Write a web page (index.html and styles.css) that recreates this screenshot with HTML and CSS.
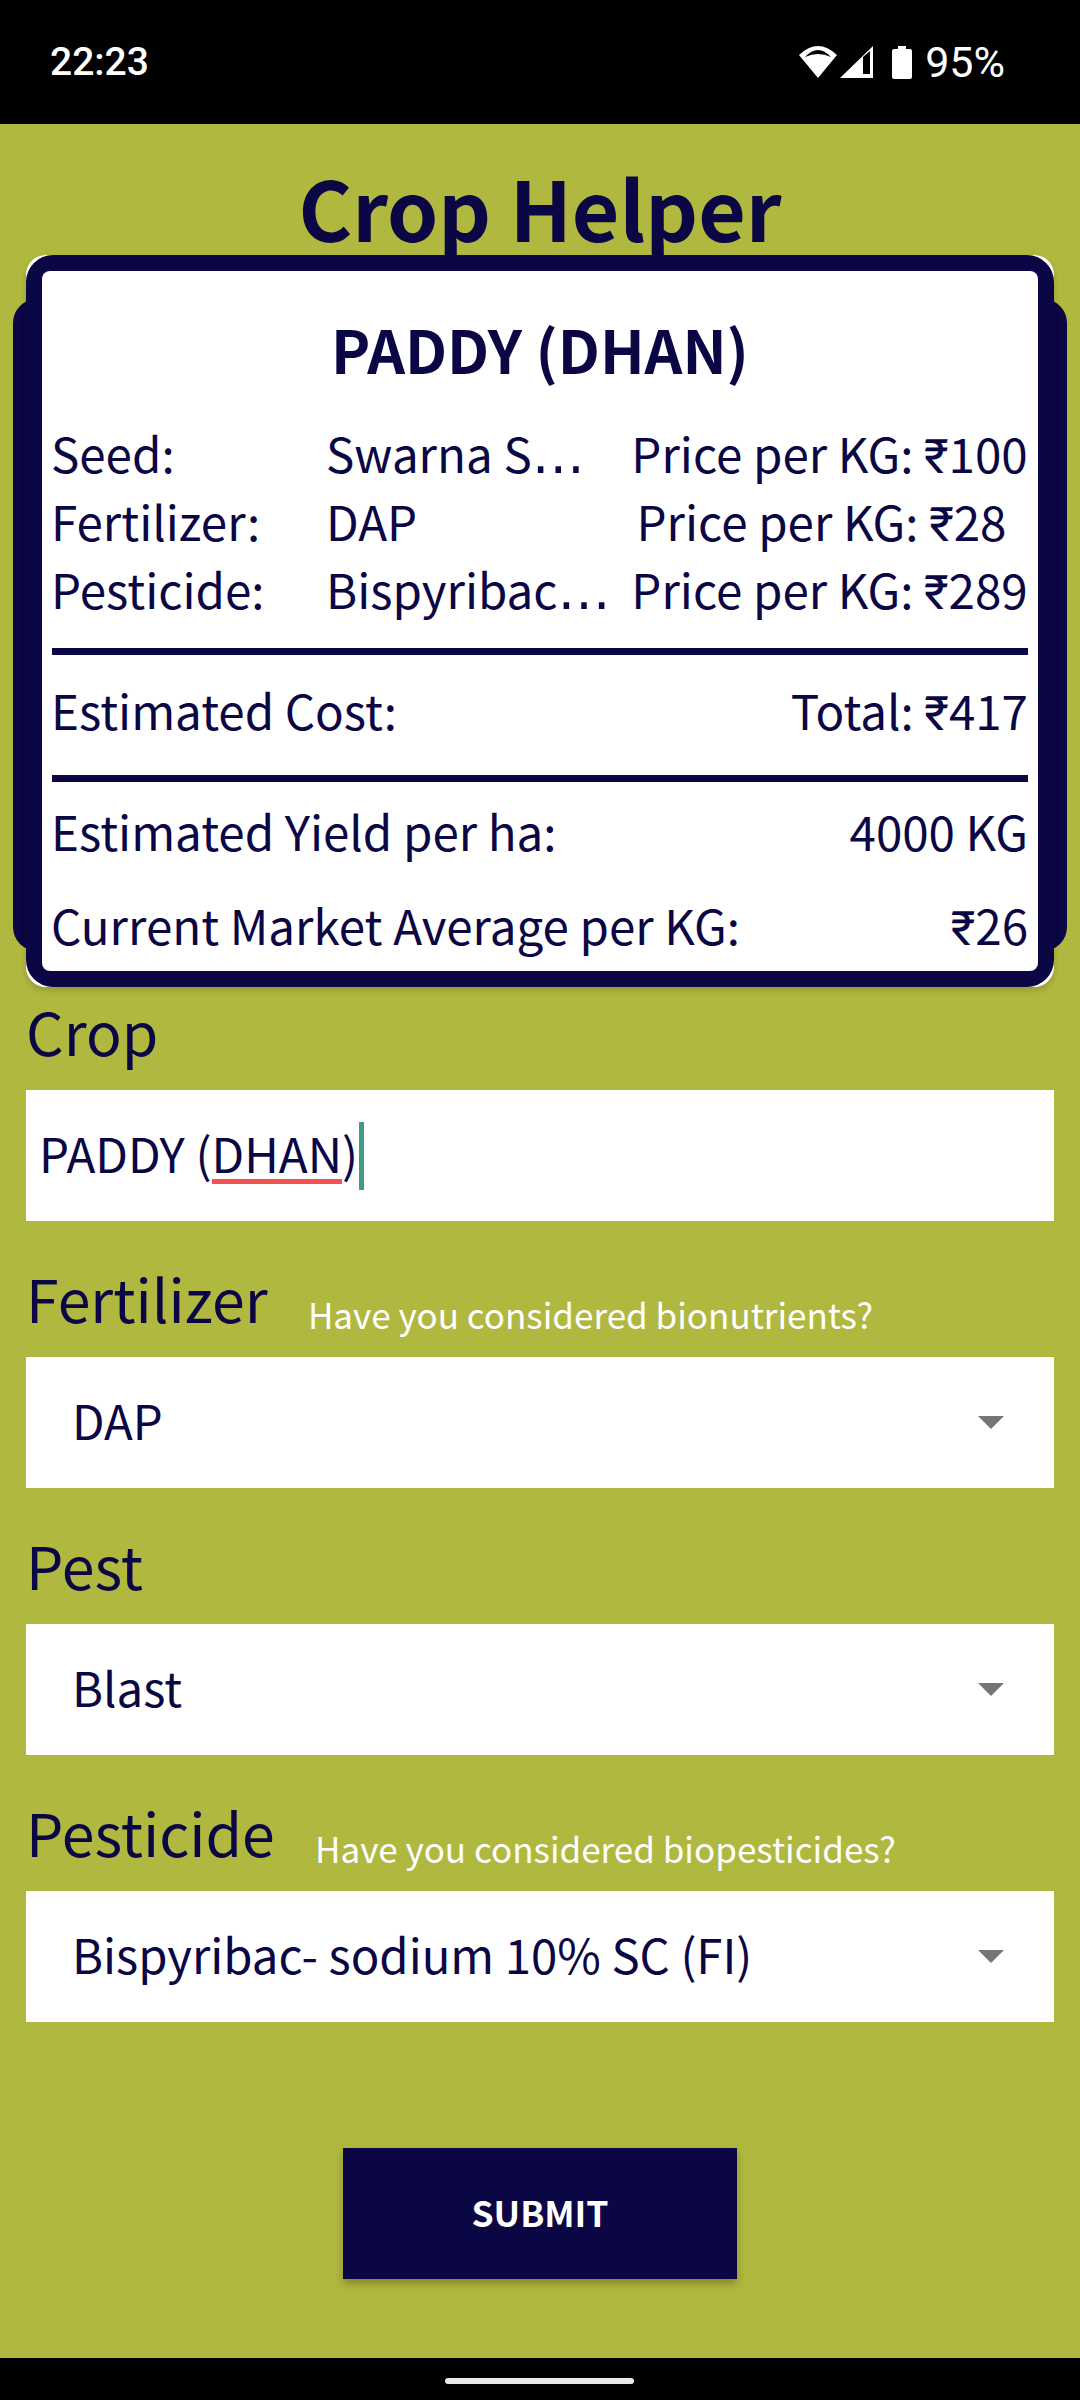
FILE: index.html
```html
<!DOCTYPE html>
<html lang="en">
    <head>
        <meta charset="utf-8" />
        <title>Crop Helper</title>
        <link rel="stylesheet" href="styles.css">
    </head>
    <body>
        <div id="statusBar">
            <span class="clock">22:23</span>
            <div class="statusIcons">
                <svg class="wifi" width="38" height="32" viewBox="0 0 38 32"><path d="M19 32 L0 9 Q19 -9 38 9 Z M6 11 Q19 -3 32 11 Q19 5 6 11 Z" fill="#fff" fill-rule="evenodd"/></svg>
                <svg class="signal" width="33" height="32" viewBox="0 0 33 32"><path d="M33 0 V32 H0 Z M23 28 H30 V5 L23 11 Z" fill="#fff" fill-rule="evenodd"/></svg>
                <svg class="battery" width="20" height="33" viewBox="0 0 20 33"><path d="M6 0 H14 V3 H18 Q20 3 20 5 V31 Q20 33 18 33 H2 Q0 33 0 31 V5 Q0 3 2 3 H6 Z" fill="#fff"/></svg>
                <span class="percent">95%</span>
            </div>
        </div>

        <div id="content">
            <h1 class="appTitle">Crop Helper</h1>

            <div class="cardWrap">
                <div class="card">
                    <div class="cardFrame">
                        <h2 class="cropName">PADDY (DHAN)</h2>
                        <div class="inputRows">
                            <div class="inputRow">
                                <span class="rowLabel">Seed:</span>
                                <span class="rowValue">Swarna S<span class="dots">…</span></span>
                                <span class="rowPrice">Price per KG: ₹100</span>
                            </div>
                            <div class="inputRow">
                                <span class="rowLabel">Fertilizer:</span>
                                <span class="rowValue">DAP</span>
                                <span class="rowPrice priceShort">Price per KG: ₹28</span>
                            </div>
                            <div class="inputRow">
                                <span class="rowLabel">Pesticide:</span>
                                <span class="rowValue">Bispyribac<span class="dots">…</span></span>
                                <span class="rowPrice">Price per KG: ₹289</span>
                            </div>
                        </div>
                        <div class="costRow">
                            <span>Estimated Cost:</span>
                            <span>Total: ₹417</span>
                        </div>
                        <div class="yieldRow">
                            <span>Estimated Yield per ha:</span>
                            <span>4000 KG</span>
                        </div>
                        <div class="marketRow">
                            <span>Current Market Average per KG:</span>
                            <span>₹26</span>
                        </div>
                    </div>
                </div>
            </div>

            <div class="fieldLabel firstLabel">Crop</div>
            <div class="cropInput">
                <span>PADDY (<span class="misspelt">DHAN</span>)</span><span class="caret"></span>
            </div>

            <div class="fieldLabel">Fertilizer <span class="hint">Have you considered bionutrients?</span></div>
            <div class="selectBox">
                <span>DAP</span>
                <span class="arrow"></span>
            </div>

            <div class="fieldLabel">Pest</div>
            <div class="selectBox">
                <span>Blast</span>
                <span class="arrow"></span>
            </div>

            <div class="fieldLabel">Pesticide <span class="hint">Have you considered biopesticides?</span></div>
            <div class="selectBox">
                <span>Bispyribac- sodium 10% SC (FI)</span>
                <span class="arrow"></span>
            </div>

            <div class="submitWrap">
                <button class="submitBtn">SUBMIT</button>
            </div>
        </div>

        <div id="navBar">
            <div class="homeBar"></div>
        </div>
    </body>
</html>
```
FILE: styles.css
```css
* {
    box-sizing: border-box;
}
html, body {
    margin: 0;
    padding: 0;
}
body {
    width: 1080px;
    height: 2400px;
    background-color: #000;
    font-family: "Noto Sans CJK SC", Roboto, "Noto Sans", sans-serif;
    color: #0B0644;
    overflow: hidden;
}

/* status bar */
#statusBar {
    height: 124px;
    background-color: #000;
    color: #fff;
    display: flex;
    justify-content: space-between;
    align-items: center;
    padding: 0 75px 0 50px;
    font-family: Roboto, sans-serif;
}
.clock {
    font-size: 39px;
    font-weight: 500;
}
.percent {
    font-size: 43px;
    font-weight: 400;
}
.statusIcons {
    display: flex;
    align-items: center;
}
.wifi {
    margin-right: 3px;
}
.signal {
    margin-right: 19px;
}
.battery {
    margin-right: 13px;
}

/* main area */
#content {
    height: 2234px;
    background-color: #B1B840;
    padding: 0 26px;
    display: flex;
    flex-direction: column;
}
.appTitle {
    margin: 0;
    height: 131px;
    line-height: 131px;
    padding-top: 17px;
    font-size: 82px;
    font-weight: 700;
    text-align: center;
    white-space: nowrap;
}

/* summary card */
.cardWrap {
    position: relative;
    height: 732px;
}
.cardWrap::before {
    content: "";
    position: absolute;
    left: -13px;
    right: -13px;
    top: 44px;
    bottom: 36px;
    background-color: #0B0644;
    border-radius: 24px;
}
.card {
    position: relative;
    height: 732px;
    background-color: #fff;
    border-radius: 20px;
    box-shadow: 0 4px 6px rgba(0, 0, 0, 0.15);
}
.cardFrame {
    height: 732px;
    background-color: #0B0644;
    border-radius: 27px;
    padding: 16px;
}
.cardFrame > * {
    background-color: #fff;
}
.cropName {
    margin: 0;
    height: 148px;
    padding-top: 43px;
    line-height: 70px;
    font-size: 59px;
    font-weight: 700;
    text-align: center;
    border-radius: 8px 8px 0 0;
}
.inputRows {
    height: 229px;
    padding: 0 10px 0 9px;
    font-size: 47.5px;
    line-height: 68px;
}
.inputRow {
    display: grid;
    grid-template-columns: 275px 305px 1fr;
    height: 68px;
}
.rowValue {
    white-space: nowrap;
}
.dots {
    font-family: "DejaVu Sans", sans-serif;
    font-size: 53px;
    line-height: 0;
}
.rowPrice {
    text-align: center;
    white-space: nowrap;
}
.priceShort {
    padding-right: 16px;
}
.costRow, .yieldRow, .marketRow {
    display: flex;
    justify-content: space-between;
    align-items: center;
    padding: 0 10px 0 9px;
    font-size: 47.5px;
    white-space: nowrap;
}
.costRow {
    height: 134px;
    padding-bottom: 12px;
    background-image: linear-gradient(#0B0644, #0B0644), linear-gradient(#0B0644, #0B0644);
    background-size: 976px 7px;
    background-position: 10px 0, 10px 127px;
    background-repeat: no-repeat;
}
.yieldRow {
    height: 96px;
}
.marketRow {
    height: 93px;
    border-radius: 0 0 8px 8px;
}

/* form */
.fieldLabel {
    height: 85px;
    font-size: 59px;
    line-height: 51px;
    white-space: nowrap;
    margin-top: 51px;
}
.firstLabel {
    margin-top: 0;
    height: 103px;
    line-height: 88px;
}
.hint {
    margin-left: 27px;
    font-size: 35px;
    color: #fff;
    vertical-align: -6px;
}
.cropInput {
    height: 131px;
    background-color: #fff;
    display: flex;
    align-items: center;
    padding: 0 0 6px 13px;
    font-size: 47.5px;
}
.misspelt {
    border-bottom: 5px solid #EF5350;
    line-height: 52px;
    display: inline-block;
}
.caret {
    width: 5px;
    height: 68px;
    margin: 6px 0 0 1px;
    background-color: #439A86;
}
.selectBox {
    height: 131px;
    background-color: #fff;
    display: flex;
    align-items: center;
    justify-content: space-between;
    padding: 0 50px 6px 46px;
    font-size: 47.3px;
}
.arrow {
    width: 0;
    height: 0;
    margin-top: 6px;
    border-left: 13px solid transparent;
    border-right: 13px solid transparent;
    border-top: 13px solid #757575;
}
.submitWrap {
    display: flex;
    justify-content: center;
    margin-top: 126px;
}
.submitBtn {
    width: 394px;
    height: 131px;
    border: none;
    padding-bottom: 6px;
    background-color: #0B0644;
    color: #fff;
    font-family: inherit;
    font-size: 35.5px;
    font-weight: 700;
    box-shadow: 0 5px 8px rgba(0, 0, 0, 0.25);
}

/* navigation bar */
#navBar {
    height: 42px;
    background-color: #000;
    display: flex;
    justify-content: center;
    padding: 20px 2px 0 0;
}
.homeBar {
    width: 189px;
    height: 6px;
    border-radius: 3px;
    background-color: #E8E8E8;
}
```
